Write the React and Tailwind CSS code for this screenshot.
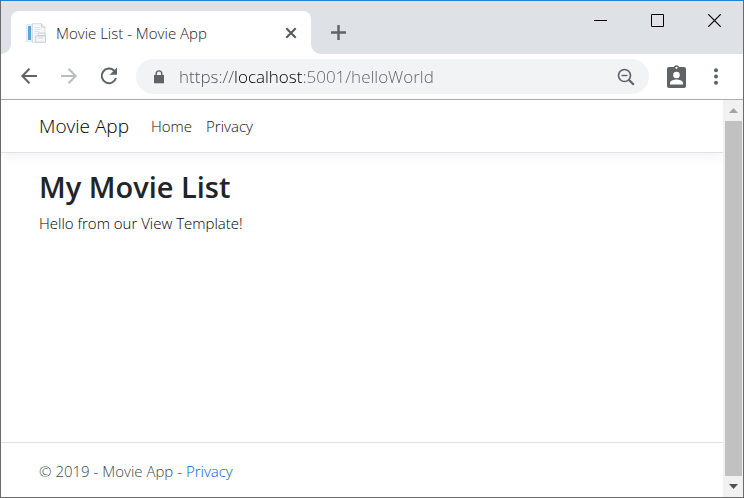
import React from "react";

function FileIcon() {
  return (
    <svg width="20" height="20" viewBox="0 0 20 20" aria-hidden="true" className="shrink-0">
      <path d="M.5 1.500h5v17h-5z" fill="#eef3f7" stroke="#d3dbe0" strokeWidth=".6" />
      <path d="M2 3h3v14H2z" fill="#5aa5da" />
      <path d="M6.500 .7h9l3.500 3.500v15H6.500z" fill="#f8f8f8" stroke="#cfd2d4" strokeWidth=".8" />
      <path d="M15.500 .7v3.500H19" fill="#eee" stroke="#c3c7ca" strokeWidth=".8" />
      <path d="M8.500 4.500h5M8.500 6.500h7M8.500 8.500h5M8.500 10.500h2M8.500 12.500h1M8.500 14.500h1" stroke="#dcdfe1" strokeWidth=".9" />
      <path d="M12 10h7v2.500h-7zM9.700 13h9.800v6.200H9.700z" fill="#f5f6f7" stroke="#c3c7ca" strokeWidth=".8" />
      <path d="M11.500 15h6" stroke="#d3d7da" strokeWidth=".9" />
    </svg>
  );
}

function TabFlare({ flip }) {
  return (
    <svg width="10" height="10" viewBox="0 0 10 10" aria-hidden="true" className={flip ? "-scale-x-100 self-end" : "self-end"}>
      <path d="M10 0v10H0A10 10 0 0 0 10 0z" fill="#fff" />
    </svg>
  );
}

function TabStrip() {
  return (
    <header className="flex h-[53px] shrink-0 bg-[#dee1e6]">
      <div className="flex items-stretch pt-[10px]">
        <TabFlare />
        <div className="flex w-[300px] items-center rounded-t-lg bg-white pr-3 pl-[15px]">
          <FileIcon />
          <span className="ml-[10px] flex-1 text-[15px] leading-5 font-light text-[#202124]">Movie List - Movie App</span>
          <button type="button" aria-label="Close tab" className="flex size-4 items-center justify-center">
            <svg width="12" height="12" viewBox="0 0 12 12" stroke="#54585c" strokeWidth="2">
              <path d="M1.300 1.300l9.400 9.400M10.700 1.300l-9.400 9.400" />
            </svg>
          </button>
        </div>
        <TabFlare flip />
      </div>
      <button type="button" aria-label="New tab" className="ml-[10px] flex h-[63px] w-[15px] items-center justify-center">
        <svg width="15" height="15" viewBox="0 0 15 15" stroke="#5f6368" strokeWidth="2.400" className="shrink-0">
          <path d="M7.500 0v15M0 7.500h15" />
        </svg>
      </button>
      <div className="ml-auto flex h-[38px]">
        <button type="button" aria-label="Minimize" className="flex w-[57px] items-center justify-center">
          <svg width="13" height="13" viewBox="0 0 13 13" stroke="#000"><path d="M0 6.500h13" /></svg>
        </button>
        <button type="button" aria-label="Maximize" className="flex w-[57px] items-center justify-center">
          <svg width="13" height="13" viewBox="0 0 13 13" fill="none" stroke="#000"><path d="M.5.5h12v12H.5z" /></svg>
        </button>
        <button type="button" aria-label="Close" className="flex w-[57px] items-center justify-center">
          <svg width="13" height="13" viewBox="0 0 13 13" stroke="#000" strokeWidth="1.200"><path d="M.3.3l12.400 12.400M12.700.3L.3 12.700" /></svg>
        </button>
      </div>
    </header>
  );
}

function Toolbar() {
  return (
    <div className="flex h-[46px] shrink-0 items-center border-b border-[#adadad] bg-white pr-6 pl-[18px]">
      <button type="button" aria-label="Back" className="size-5">
        <svg width="20" height="20" viewBox="0 0 20 20" fill="none" stroke="#5f6368" strokeWidth="2"><path d="M18 9H3.500M10.500 1.800L3.300 9l7.200 7.200" /></svg>
      </button>
      <button type="button" aria-label="Forward" disabled className="ml-5 size-5">
        <svg width="20" height="20" viewBox="0 0 20 20" fill="none" stroke="#babcbe" strokeWidth="2"><path d="M2 9h14.500M9.500 1.800l7.200 7.200-7.200 7.200" /></svg>
      </button>
      <button type="button" aria-label="Reload" className="ml-[19px] size-[22px]">
        <svg width="22" height="22" viewBox="0 0 22 22" fill="none">
          <path d="M16.200 4.700A7.300 7.300 0 1 0 18 12" stroke="#5f6368" strokeWidth="2" />
          <path d="M19 1.500v7.300h-7.300z" fill="#5f6368" />
        </svg>
      </button>
      <div className="ml-4 flex h-[35px] flex-1 items-center rounded-full bg-[#f1f3f4] pr-[14px] pl-[18px]">
        <svg width="10" height="14" viewBox="0 0 10 14" aria-hidden="true" className="shrink-0">
          <path d="M0 5h10v8.300H0z" fill="#5f6368" />
          <path d="M2.200 5.500V3.700a2.800 2.800 0 0 1 5.600 0v1.800" fill="none" stroke="#5f6368" strokeWidth="1.400" />
        </svg>
        <input
          type="text"
          aria-label="Address"
          defaultValue="https://localhost:5001/helloWorld"
          className="ml-[15px] h-6 min-w-0 flex-1 bg-[linear-gradient(90deg,#4d5156_55px,#000_55px,#000_123px,#5a5f64_123px)] bg-clip-text text-[17px] leading-6 font-light text-transparent outline-none"
        />
        <button type="button" aria-label="Zoom" className="size-[18px]">
          <svg width="18" height="18" viewBox="0 0 18 18" fill="none" stroke="#5f6368" strokeWidth="1.700">
            <circle cx="7.500" cy="7.500" r="6" />
            <path d="M4.500 7.500h6" strokeWidth="1.400" />
            <path d="M11.800 11.800l5 5" strokeWidth="2.200" />
          </svg>
        </button>
      </div>
      <button type="button" aria-label="Profile" className="ml-[18px] h-6 w-[19px]">
        <svg width="19" height="24" viewBox="0 0 19 24">
          <rect y="2" width="19" height="21" rx="2" fill="#5f6368" />
          <circle cx="9.500" cy="2.800" r="1.900" fill="#fff" stroke="#5f6368" strokeWidth="1.500" />
          <circle cx="9.500" cy="10" r="3.300" fill="#fff" />
          <path d="M3 19.500v-1.700c0-2.200 4.300-3.400 6.500-3.400s6.500 1.200 6.500 3.400v1.700z" fill="#fff" />
        </svg>
      </button>
      <button type="button" aria-label="Menu" className="ml-7 h-[18px] w-[5px]">
        <svg width="5" height="18" viewBox="0 0 5 18" fill="#5f6368">
          <circle cx="2" cy="2.200" r="2" /><circle cx="2" cy="8.500" r="2" /><circle cx="2" cy="14.800" r="2" />
        </svg>
      </button>
    </div>
  );
}

function ScrollBar() {
  return (
    <div className="flex w-5 shrink-0 flex-col bg-[#f1f1f1] pr-px pl-[2px]">
      <button type="button" aria-label="Scroll up" className="flex h-[21px] items-center justify-center">
        <svg width="9" height="5" viewBox="0 0 9 5" fill="#a3a3a3"><path d="M4.500 0L9 5H0z" /></svg>
      </button>
      <div className="flex-1 bg-[#c1c1c1]" />
      <button type="button" aria-label="Scroll down" className="flex h-[21px] items-center justify-center">
        <svg width="9" height="5" viewBox="0 0 9 5" fill="#505050"><path d="M0 0h9L4.500 5z" /></svg>
      </button>
    </div>
  );
}

export default function App() {
  return (
    <div className="flex h-screen flex-col border border-[#6b6b6b] border-t-[#1883d7] bg-white font-['Open_Sans','Noto_Sans',sans-serif]">
      <TabStrip />
      <Toolbar />
      <div className="flex min-h-0 flex-1">
        <div className="flex min-w-0 flex-1 flex-col text-[15px] leading-6 font-light text-black">
          <nav className="flex h-[53px] shrink-0 items-center border-b border-[#dee2e6] px-[38px] shadow-[0_4px_12px_rgba(0,0,0,0.05)]">
            <a href="#app" className="text-[19px]">Movie App</a>
            <a href="#home" className="ml-[22px] text-[#111]">Home</a>
            <a href="#privacy" className="ml-[14px] text-[#111]">Privacy</a>
          </nav>
          <main className="flex-1 px-[38px] pt-[15px]">
            <h1 className="text-[29px] leading-[38px] font-semibold text-[#212529]">My Movie List</h1>
            <p className="mt-[5px]">Hello from our View Template!</p>
          </main>
          <footer className="border-t border-[#dee2e6] px-[38px] pt-4 pb-[14px] text-[#40474e]">
            © 2019 - Movie App - <a href="#privacy" className="text-[#0060e0]">Privacy</a>
          </footer>
        </div>
        <ScrollBar />
      </div>
    </div>
  );
}
